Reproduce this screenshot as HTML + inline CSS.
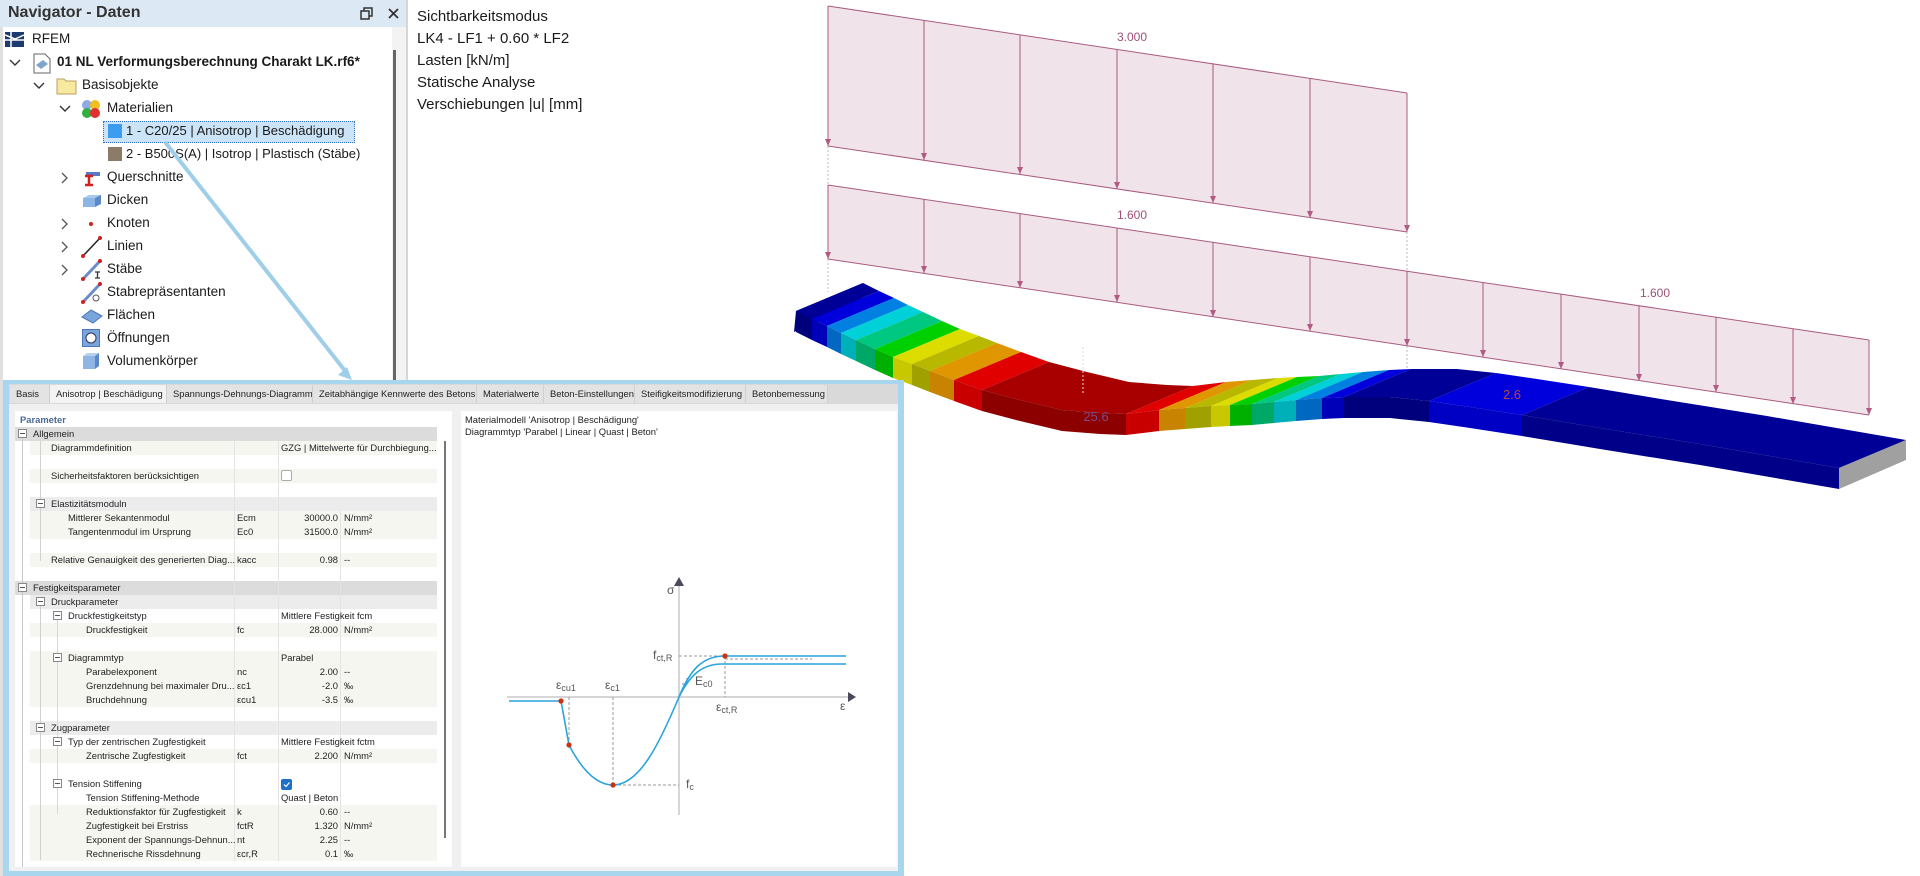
<!DOCTYPE html>
<html><head><meta charset="utf-8"><style>
*{margin:0;padding:0;box-sizing:border-box}
body{width:1920px;height:876px;overflow:hidden;background:#fff;font-family:"Liberation Sans",sans-serif;position:relative;color:#222}
.a{position:absolute;white-space:nowrap}
.nv{font-size:13.5px;color:#1a1a1a}
.ov{font-size:15px;color:#1a1a1a;left:417px}
.t{font-size:9.4px;color:#1e1e1e;position:absolute;white-space:nowrap;line-height:14px}
.row{position:absolute;left:30px;width:407px;height:14px}
.tab{position:absolute;top:385px;height:18px;background:#e3e3e3;font-size:9.4px;line-height:18px;padding-left:6px;color:#222;border-right:1px solid #d0d0d0;white-space:nowrap;overflow:hidden}
.mb{position:absolute;width:9px;height:9px;border:1px solid #888;background:#fff}
.mb:after{content:"";position:absolute;left:1px;top:3px;width:5px;height:1px;background:#555}
</style></head><body>

<!-- Navigator -->
<div class="a" style="left:0;top:0;width:408px;height:27px;background:#dce8f4"></div>
<div class="a" style="left:8px;top:4px;font-size:16px;font-weight:bold;color:#333">Navigator - Daten</div>
<svg class="a" style="left:360px;top:6px" width="44" height="16"><rect x="1" y="5" width="8" height="8" fill="none" stroke="#333" stroke-width="1.5"/><path d="M4 5V2h8v8h-3" fill="none" stroke="#333" stroke-width="1.5"/><path d="M29 3l9 9M38 3l-9 9" stroke="#333" stroke-width="1.8"/></svg>
<div class="a" style="left:0;top:27px;width:3px;height:849px;background:#e0e0e0"></div>
<div class="a" style="left:392px;top:27px;width:14px;height:849px;background:#f3f3f3"></div>
<div class="a" style="left:393px;top:50px;width:3px;height:826px;background:#666"></div>
<div class="a" style="left:406px;top:0;width:2px;height:876px;background:#d6d6d6"></div>

<svg class="a" style="left:5px;top:32px" width="20" height="16"><rect x="0" y="0" width="19" height="15" fill="#1d3b6e"/><path d="M0 8h19M6 0v15M0 3l10 4 9-4" stroke="#fff" stroke-width="1.5" fill="none"/></svg>
<div class="a nv" style="left:32px;top:31px">RFEM</div>
<svg class="a" style="left:9px;top:58px" width="12" height="10"><path d="M1 2l5 5 5-5" fill="none" stroke="#333" stroke-width="1.4"/></svg>
<svg class="a" style="left:33px;top:53px" width="18" height="21"><path d="M1 1h11l5 5v14H1z" fill="#fff" stroke="#666"/><path d="M3 12l7-5 5 4-7 5z" fill="#7fa6c9"/></svg>
<div class="a nv" style="left:57px;top:54px;font-weight:bold">01 NL Verformungsberechnung Charakt LK.rf6*</div>
<svg class="a" style="left:33px;top:81px" width="12" height="10"><path d="M1 2l5 5 5-5" fill="none" stroke="#333" stroke-width="1.4"/></svg>
<svg class="a" style="left:56px;top:76px" width="22" height="19"><path d="M1 3h7l2 2h10v13H1z" fill="#f8e9a1" stroke="#b8a060"/></svg>
<div class="a nv" style="left:82px;top:77px">Basisobjekte</div>
<svg class="a" style="left:59px;top:104px" width="12" height="10"><path d="M1 2l5 5 5-5" fill="none" stroke="#333" stroke-width="1.4"/></svg>
<svg class="a" style="left:81px;top:99px" width="20" height="20"><circle cx="6" cy="6" r="5" fill="#8fa8e8"/><circle cx="14" cy="6" r="5" fill="#f0c020"/><circle cx="6" cy="14" r="5" fill="#30b040"/><circle cx="14" cy="14" r="5" fill="#e03030"/></svg>
<div class="a nv" style="left:107px;top:100px">Materialien</div>
<div class="a" style="left:103px;top:121px;width:252px;height:22px;background:#cce4f7;border:1px dotted #3070c0"></div>
<div class="a" style="left:108px;top:124px;width:14px;height:14px;background:#3c9cf0"></div>
<div class="a nv" style="left:126px;top:123px;font-size:13px">1 - C20/25 | Anisotrop | Beschädigung</div>
<div class="a" style="left:108px;top:147px;width:14px;height:14px;background:#8c7b66"></div>
<div class="a nv" style="left:126px;top:146px;font-size:13px">2 - B500S(A) | Isotrop | Plastisch (Stäbe)</div>
<svg class="a" style="left:60px;top:172px" width="10" height="12"><path d="M2 1l5 5-5 5" fill="none" stroke="#555" stroke-width="1.3"/></svg>
<svg class="a" style="left:82px;top:168px" width="20" height="20"><path d="M4 4h14v4H4z" fill="#5a78c8"/><path d="M3 8h8M7 8v9M3 17h8" stroke="#d02020" stroke-width="2.5"/></svg>
<div class="a nv" style="left:107px;top:169px">Querschnitte</div>
<svg class="a" style="left:82px;top:193px" width="20" height="16"><path d="M1 5l6-3h12l-6 3z" fill="#a8c8ec"/><path d="M1 5h12v9H1z" fill="#8cb4e4"/><path d="M13 5l6-3v9l-6 3z" fill="#5a88c8"/></svg>
<div class="a nv" style="left:107px;top:192px">Dicken</div>
<svg class="a" style="left:60px;top:218px" width="10" height="12"><path d="M2 1l5 5-5 5" fill="none" stroke="#555" stroke-width="1.3"/></svg>
<div class="a" style="left:89px;top:222px;width:4px;height:4px;border-radius:2px;background:#d02020"></div>
<div class="a nv" style="left:107px;top:215px">Knoten</div>
<svg class="a" style="left:60px;top:241px" width="10" height="12"><path d="M2 1l5 5-5 5" fill="none" stroke="#555" stroke-width="1.3"/></svg>
<svg class="a" style="left:81px;top:236px" width="22" height="22"><path d="M2 20L19 2" stroke="#222" stroke-width="1.5"/><circle cx="2" cy="20" r="2" fill="#d02020"/><circle cx="19" cy="2" r="2" fill="#d02020"/></svg>
<div class="a nv" style="left:107px;top:238px">Linien</div>
<svg class="a" style="left:60px;top:264px" width="10" height="12"><path d="M2 1l5 5-5 5" fill="none" stroke="#555" stroke-width="1.3"/></svg>
<svg class="a" style="left:81px;top:259px" width="22" height="22"><path d="M2 20L19 2" stroke="#6a8cc8" stroke-width="3"/><circle cx="2" cy="20" r="2" fill="#d02020"/><circle cx="19" cy="2" r="2" fill="#d02020"/><path d="M14 13h5M16.5 13v6M14 19h5" stroke="#333" stroke-width="1.3"/></svg>
<div class="a nv" style="left:107px;top:261px">Stäbe</div>
<svg class="a" style="left:81px;top:282px" width="22" height="22"><path d="M2 20L19 2" stroke="#6a8cc8" stroke-width="3"/><circle cx="2" cy="20" r="2" fill="#d02020"/><circle cx="19" cy="2" r="2" fill="#d02020"/><circle cx="15" cy="16" r="3" fill="none" stroke="#555"/></svg>
<div class="a nv" style="left:107px;top:284px">Stabrepräsentanten</div>
<svg class="a" style="left:81px;top:308px" width="22" height="16"><path d="M1 9l9-7 11 6-9 7z" fill="#7aa4dc" stroke="#4a78b8"/></svg>
<div class="a nv" style="left:107px;top:307px">Flächen</div>
<svg class="a" style="left:82px;top:329px" width="18" height="18"><rect x="0.5" y="0.5" width="17" height="17" fill="#7aa4dc" stroke="#4a78b8"/><circle cx="9" cy="9" r="5" fill="#fff" stroke="#335"/></svg>
<div class="a nv" style="left:107px;top:330px">Öffnungen</div>
<svg class="a" style="left:82px;top:352px" width="18" height="18"><path d="M1 4l4-3h12l-4 3z" fill="#b8d0f0"/><path d="M1 4h12v13H1z" fill="#90b4e4"/><path d="M13 4l4-3v13l-4 3z" fill="#5a88c8"/></svg>
<div class="a nv" style="left:107px;top:353px">Volumenkörper</div>

<!-- selection arrow -->
<svg class="a" style="left:0;top:0" width="420" height="400"><path d="M165 142L346 372" stroke="#9fcfe8" stroke-width="4"/><path d="M352 380l-14-5 9-8z" fill="#9fcfe8"/></svg>

<!-- overlay text -->
<div class="a ov" style="top:8px">Sichtbarkeitsmodus</div>
<div class="a ov" style="top:30px">LK4 - LF1 + 0.60 * LF2</div>
<div class="a ov" style="top:52px">Lasten [kN/m]</div>
<div class="a ov" style="top:74px">Statische Analyse</div>
<div class="a ov" style="top:96px">Verschiebungen |u| [mm]</div>

<!-- 3D view -->
<svg class="a" style="left:0;top:0" width="1920" height="876">
<g fill="#f0e4ea" stroke="none">
<polygon points="828,6 1407,93 1407,232 828,146"/>
<polygon points="828,185 1869,340 1869,415 828,259"/>
</g>
<g stroke="#a85a80" stroke-width="1" fill="none">
<path d="M828,6L1407,93M828,146L1407,232M828,185L1869,340M828,259L1869,415"/>
<path d="M828,6V146M924,20V160M1020,35V174M1117,49V189M1213,64V203M1310,78V218M1407,93V232"/>
<path d="M828,185V259M924,199V273M1020,214V288M1117,228V302M1213,242V317M1310,257V331M1407,271V346M1483,282V357M1561,294V369M1639,306V381M1716,317V392M1793,329V404M1869,340V415"/>
</g>
<g fill="#b05a84">
<path d="M825,139h6l-3,7z M921,153h6l-3,7z M1017,167h6l-3,7z M1114,182h6l-3,7z M1210,196h6l-3,7z M1307,211h6l-3,7z M1404,225h6l-3,7z"/>
<path d="M825,252h6l-3,7z M921,266h6l-3,7z M1017,281h6l-3,7z M1114,295h6l-3,7z M1210,310h6l-3,7z M1307,324h6l-3,7z M1404,339h6l-3,7z M1480,350h6l-3,7z M1558,362h6l-3,7z M1636,374h6l-3,7z M1713,385h6l-3,7z M1790,397h6l-3,7z M1866,408h6l-3,7z"/>
</g>
<g stroke="#bbb" stroke-width="1" stroke-dasharray="2,2"><path d="M828,146V185M828,259V292M1407,232V271M1407,346V383"/></g>
<g font-family="Liberation Sans" font-size="12" fill="#a0507a" text-anchor="middle"><text x="1132" y="41">3.000</text><text x="1132" y="219">1.600</text><text x="1655" y="297">1.600</text></g>

<polygon points="796,311 863,283 862,303 794,332" fill="#000080"/>
<polygon points="796,311 812,319 879,291 863,283" fill="#000096"/>
<polygon points="812,319 827,326 894,298 879,291" fill="#0000dc"/>
<polygon points="827,326 841,333 908,305 894,298" fill="#0080e0"/>
<polygon points="841,333 856,340 923,312 908,305" fill="#00d0d8"/>
<polygon points="856,340 875,349 942,321 923,312" fill="#00c880"/>
<polygon points="875,349 893,357 960,329 942,321" fill="#00d000"/>
<polygon points="893,357 912,364 979,336 960,329" fill="#dcdc00"/>
<polygon points="912,364 930,371 997,343 979,336" fill="#b8b800"/>
<polygon points="930,371 954,380 1021,352 997,343" fill="#e09600"/>
<polygon points="954,380 982,390 1049,362 1021,352" fill="#e00000"/>
<polygon points="982,390 1020,400 1062,410 1100,413 1126,414 1193,386 1167,385 1129,382 1087,372 1049,362" fill="#a80000"/>
<polygon points="1126,414 1159,410 1226,382 1193,386" fill="#e00000"/>
<polygon points="1159,410 1185,408 1252,380 1226,382" fill="#e09600"/>
<polygon points="1185,408 1211,406 1278,378 1252,380" fill="#b8b800"/>
<polygon points="1211,406 1230,405 1297,377 1278,378" fill="#dcdc00"/>
<polygon points="1230,405 1252,404 1319,376 1297,377" fill="#00d000"/>
<polygon points="1252,404 1274,402 1341,374 1319,376" fill="#00c880"/>
<polygon points="1274,402 1296,400 1363,372 1341,374" fill="#00d0d8"/>
<polygon points="1296,400 1322,398 1389,370 1363,372" fill="#0080e0"/>
<polygon points="1322,398 1344,397 1411,369 1389,370" fill="#0000dc"/>
<polygon points="1344,397 1390,397 1429,401 1496,373 1457,369 1411,369" fill="#000096"/>
<polygon points="1429,401 1470,407 1522,415 1589,387 1537,379 1496,373" fill="#0000dc"/>
<polygon points="1522,415 1600,428 1700,444 1839,468 1906,440 1767,416 1667,400 1589,387" fill="#000096"/>
<polygon points="796,311 812,319 812,340 796,332" fill="#00007c"/>
<polygon points="812,319 827,326 827,347 812,340" fill="#0000b8"/>
<polygon points="827,326 841,333 841,354 827,347" fill="#0068c0"/>
<polygon points="841,333 856,340 856,361 841,354" fill="#00b0b8"/>
<polygon points="856,340 875,349 875,370 856,361" fill="#00a868"/>
<polygon points="875,349 893,357 893,378 875,370" fill="#00b000"/>
<polygon points="893,357 912,364 912,385 893,378" fill="#c8c800"/>
<polygon points="912,364 930,371 930,392 912,385" fill="#a0a000"/>
<polygon points="930,371 954,380 954,401 930,392" fill="#c88400"/>
<polygon points="954,380 982,390 982,411 954,401" fill="#c80000"/>
<polygon points="982,390 1020,400 1062,410 1100,413 1126,414 1126,435 1100,434 1062,431 1020,421 982,411" fill="#8c0000"/>
<polygon points="1126,414 1159,410 1159,431 1126,435" fill="#c80000"/>
<polygon points="1159,410 1185,408 1185,429 1159,431" fill="#c88400"/>
<polygon points="1185,408 1211,406 1211,427 1185,429" fill="#a0a000"/>
<polygon points="1211,406 1230,405 1230,426 1211,427" fill="#c8c800"/>
<polygon points="1230,405 1252,404 1252,425 1230,426" fill="#00b000"/>
<polygon points="1252,404 1274,402 1274,423 1252,425" fill="#00a868"/>
<polygon points="1274,402 1296,400 1296,421 1274,423" fill="#00b0b8"/>
<polygon points="1296,400 1322,398 1322,419 1296,421" fill="#0068c0"/>
<polygon points="1322,398 1344,397 1344,418 1322,419" fill="#0000b8"/>
<polygon points="1344,397 1390,397 1429,401 1429,422 1390,418 1344,418" fill="#00007c"/>
<polygon points="1429,401 1470,407 1522,415 1522,436 1470,428 1429,422" fill="#0000c4"/>
<polygon points="1522,415 1600,428 1700,444 1839,468 1839,489 1700,465 1600,449 1522,436" fill="#000088"/>
<polygon points="1839,468 1906,440 1906,460 1839,489" fill="#a0a0a0"/>
<path d="M1083,347V393" stroke="#ddd" stroke-dasharray="2,2"/>
<text x="1096" y="421" font-family="Liberation Sans" font-size="13" fill="#7a4a8a" text-anchor="middle">25.6</text>
<text x="1512" y="399" font-family="Liberation Sans" font-size="13" fill="#b04848" text-anchor="middle">2.6</text>
</svg>

<!-- Dialog -->
<div class="a" style="left:3px;top:380px;width:901px;height:496px;background:#a8d6ee"></div>
<div class="a" style="left:9px;top:384px;width:889px;height:487px;background:#f0f0f0"></div>
<div class="a" style="left:9px;top:384px;width:889px;height:20px;background:#d9d9d9"></div>
<div class="tab" style="left:10px;width:40px">Basis</div>
<div class="tab" style="left:50px;width:117px;background:#f3f3f3">Anisotrop | Beschädigung</div>
<div class="tab" style="left:167px;width:146px">Spannungs-Dehnungs-Diagramm</div>
<div class="tab" style="left:313px;width:164px">Zeitabhängige Kennwerte des Betons</div>
<div class="tab" style="left:477px;width:67px">Materialwerte</div>
<div class="tab" style="left:544px;width:91px">Beton-Einstellungen</div>
<div class="tab" style="left:635px;width:111px">Steifigkeitsmodifizierung</div>
<div class="tab" style="left:746px;width:82px">Betonbemessung</div>

<div class="a" style="left:15px;top:411px;width:437px;height:456px;background:#fff"></div>
<div class="t" style="left:20px;top:413px;color:#4a6a94;font-weight:bold">Parameter</div>
<div class="a" style="left:15px;top:427px;width:422px;height:434px;background:#fff"></div>

<div class="a" style="left:15px;top:427px;width:422px;height:14px;background:#dcdcdc"></div>
<div class="row" style="top:441px;background:#f6f6f1"></div>
<div class="row" style="top:469px;background:#f6f6f1"></div>
<div class="row" style="top:497px;background:#ececec"></div>
<div class="row" style="top:511px;background:#f6f6f1"></div>
<div class="row" style="top:525px;background:#f6f6f1"></div>
<div class="row" style="top:553px;background:#f6f6f1"></div>
<div class="a" style="left:15px;top:581px;width:422px;height:14px;background:#dcdcdc"></div>
<div class="row" style="top:595px;background:#ececec"></div>
<div class="row" style="top:623px;background:#f6f6f1"></div>
<div class="row" style="top:651px;background:#f6f6f1"></div>
<div class="row" style="top:665px;background:#f6f6f1"></div>
<div class="row" style="top:679px;background:#f6f6f1"></div>
<div class="row" style="top:693px;background:#f6f6f1"></div>
<div class="row" style="top:721px;background:#ececec"></div>
<div class="row" style="top:749px;background:#f6f6f1"></div>
<div class="row" style="top:805px;background:#f6f6f1"></div>
<div class="row" style="top:819px;background:#f6f6f1"></div>
<div class="row" style="top:833px;background:#f6f6f1"></div>
<div class="row" style="top:847px;background:#f6f6f1"></div>
<div class="a" style="left:234px;top:441px;width:1px;height:420px;background:#e4e4e4"></div>
<div class="a" style="left:278px;top:441px;width:1px;height:420px;background:#e4e4e4"></div>
<div class="a" style="left:340px;top:511px;width:1px;height:350px;background:#e4e4e4"></div>
<div class="a" style="left:22px;top:437px;width:1px;height:430px;background:#c8c8c8"></div>
<div class="a" style="left:40px;top:441px;width:1px;height:120px;background:#d0d0d0"></div>
<div class="a" style="left:40px;top:600px;width:1px;height:260px;background:#d0d0d0"></div>
<div class="a" style="left:57px;top:614px;width:1px;height:200px;background:#d8d8d8"></div>
<div class="a" style="left:444px;top:441px;width:2px;height:397px;background:#777"></div>

<div class="mb" style="left:18px;top:429px"></div>
<div class="mb" style="left:36px;top:499px"></div>
<div class="mb" style="left:18px;top:583px"></div>
<div class="mb" style="left:36px;top:597px"></div>
<div class="mb" style="left:53px;top:611px"></div>
<div class="mb" style="left:53px;top:653px"></div>
<div class="mb" style="left:36px;top:723px"></div>
<div class="mb" style="left:53px;top:737px"></div>
<div class="mb" style="left:53px;top:779px"></div>

<div class="t" style="left:33px;top:427px">Allgemein</div>
<div class="t" style="left:51px;top:441px">Diagrammdefinition</div><div class="t" style="left:281px;top:441px">GZG | Mittelwerte für Durchbiegung...</div>
<div class="t" style="left:51px;top:469px">Sicherheitsfaktoren berücksichtigen</div>
<div class="a" style="left:281px;top:470px;width:11px;height:11px;border:1px solid #aaa;border-radius:2px;background:#fff"></div>
<div class="t" style="left:51px;top:497px">Elastizitätsmoduln</div>
<div class="t" style="left:68px;top:511px">Mittlerer Sekantenmodul</div><div class="t" style="left:237px;top:511px">Ecm</div><div class="t" style="left:280px;top:511px;width:58px;text-align:right">30000.0</div><div class="t" style="left:344px;top:511px">N/mm²</div>
<div class="t" style="left:68px;top:525px">Tangentenmodul im Ursprung</div><div class="t" style="left:237px;top:525px">Ec0</div><div class="t" style="left:280px;top:525px;width:58px;text-align:right">31500.0</div><div class="t" style="left:344px;top:525px">N/mm²</div>
<div class="t" style="left:51px;top:553px">Relative Genauigkeit des generierten Diag...</div><div class="t" style="left:237px;top:553px">kacc</div><div class="t" style="left:280px;top:553px;width:58px;text-align:right">0.98</div><div class="t" style="left:344px;top:553px">--</div>
<div class="t" style="left:33px;top:581px">Festigkeitsparameter</div>
<div class="t" style="left:51px;top:595px">Druckparameter</div>
<div class="t" style="left:68px;top:609px">Druckfestigkeitstyp</div><div class="t" style="left:281px;top:609px">Mittlere Festigkeit fcm</div>
<div class="t" style="left:86px;top:623px">Druckfestigkeit</div><div class="t" style="left:237px;top:623px">fc</div><div class="t" style="left:280px;top:623px;width:58px;text-align:right">28.000</div><div class="t" style="left:344px;top:623px">N/mm²</div>
<div class="t" style="left:68px;top:651px">Diagrammtyp</div><div class="t" style="left:281px;top:651px">Parabel</div>
<div class="t" style="left:86px;top:665px">Parabelexponent</div><div class="t" style="left:237px;top:665px">nc</div><div class="t" style="left:280px;top:665px;width:58px;text-align:right">2.00</div><div class="t" style="left:344px;top:665px">--</div>
<div class="t" style="left:86px;top:679px">Grenzdehnung bei maximaler Dru...</div><div class="t" style="left:237px;top:679px">εc1</div><div class="t" style="left:280px;top:679px;width:58px;text-align:right">-2.0</div><div class="t" style="left:344px;top:679px">‰</div>
<div class="t" style="left:86px;top:693px">Bruchdehnung</div><div class="t" style="left:237px;top:693px">εcu1</div><div class="t" style="left:280px;top:693px;width:58px;text-align:right">-3.5</div><div class="t" style="left:344px;top:693px">‰</div>
<div class="t" style="left:51px;top:721px">Zugparameter</div>
<div class="t" style="left:68px;top:735px">Typ der zentrischen Zugfestigkeit</div><div class="t" style="left:281px;top:735px">Mittlere Festigkeit fctm</div>
<div class="t" style="left:86px;top:749px">Zentrische Zugfestigkeit</div><div class="t" style="left:237px;top:749px">fct</div><div class="t" style="left:280px;top:749px;width:58px;text-align:right">2.200</div><div class="t" style="left:344px;top:749px">N/mm²</div>
<div class="t" style="left:68px;top:777px">Tension Stiffening</div>
<div class="a" style="left:281px;top:779px;width:11px;height:11px;border-radius:2px;background:#1e6fc8"></div>
<svg class="a" style="left:281px;top:779px" width="11" height="11"><path d="M3 5.5l2 2 3.5-4" stroke="#fff" fill="none" stroke-width="1.2"/></svg>
<div class="t" style="left:86px;top:791px">Tension Stiffening-Methode</div><div class="t" style="left:281px;top:791px">Quast | Beton</div>
<div class="t" style="left:86px;top:805px">Reduktionsfaktor für Zugfestigkeit</div><div class="t" style="left:237px;top:805px">k</div><div class="t" style="left:280px;top:805px;width:58px;text-align:right">0.60</div><div class="t" style="left:344px;top:805px">--</div>
<div class="t" style="left:86px;top:819px">Zugfestigkeit bei Erstriss</div><div class="t" style="left:237px;top:819px">fctR</div><div class="t" style="left:280px;top:819px;width:58px;text-align:right">1.320</div><div class="t" style="left:344px;top:819px">N/mm²</div>
<div class="t" style="left:86px;top:833px">Exponent der Spannungs-Dehnun...</div><div class="t" style="left:237px;top:833px">nt</div><div class="t" style="left:280px;top:833px;width:58px;text-align:right">2.25</div><div class="t" style="left:344px;top:833px">--</div>
<div class="t" style="left:86px;top:847px">Rechnerische Rissdehnung</div><div class="t" style="left:237px;top:847px">εcr,R</div><div class="t" style="left:280px;top:847px;width:58px;text-align:right">0.1</div><div class="t" style="left:344px;top:847px">‰</div>

<div class="a" style="left:461px;top:411px;width:436px;height:456px;background:#fff"></div>
<div class="t" style="left:465px;top:413px">Materialmodell 'Anisotrop | Beschädigung'</div>
<div class="t" style="left:465px;top:425px">Diagrammtyp 'Parabel | Linear | Quast | Beton'</div>
<svg class="a" style="left:0;top:0" width="920" height="876">
<g stroke="#c8c8cc" stroke-width="1.5"><path d="M507,697H848M679,815V586"/></g>
<path d="M848,692l8,5-8,5z M674,586l5-9 5,9z" fill="#4a4a5a"/>
<g stroke="#999" stroke-width="1" stroke-dasharray="3,2" fill="none"><path d="M569,697V745M613,697V785M613,785H679M679,656H725M725,656V697M725,659H812"/></g>
<path d="M682,684h5v-6" stroke="#888" fill="none"/>
<g stroke="#29a4dc" stroke-width="1.6" fill="none">
<path d="M509,701H561L569,745C583,772 598,785 613,785C640,785 660,742 679,697C690,670 702,656 725,656H846"/>
<path d="M679,697C690,675 702,664 722,664H846"/>
</g>
<g fill="#d03010"><circle cx="561" cy="701" r="2.6"/><circle cx="569" cy="745" r="2.6"/><circle cx="613" cy="785" r="2.6"/><circle cx="725" cy="656" r="2.6"/></g>
<g font-family="Liberation Sans" fill="#555" font-size="12">
<text x="667" y="594">σ</text>
<text x="653" y="659">f<tspan font-size="9" dy="2">ct,R</tspan></text>
<text x="556" y="689">ε<tspan font-size="9" dy="2">cu1</tspan></text>
<text x="605" y="689">ε<tspan font-size="9" dy="2">c1</tspan></text>
<text x="695" y="685">E<tspan font-size="9" dy="2">c0</tspan></text>
<text x="716" y="711">ε<tspan font-size="9" dy="2">ct,R</tspan></text>
<text x="840" y="710">ε</text>
<text x="686" y="788">f<tspan font-size="9" dy="2">c</tspan></text>
</g>
</svg>
</body></html>
